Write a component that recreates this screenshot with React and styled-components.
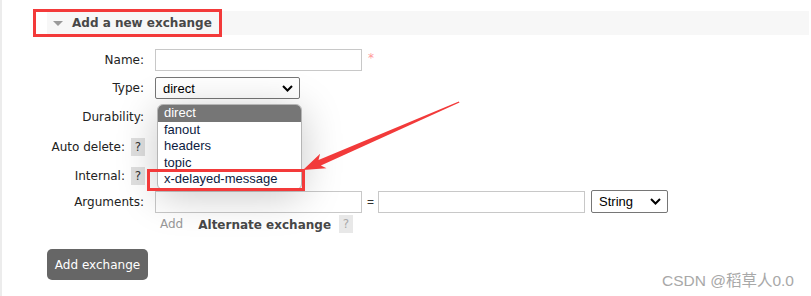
import React from 'react'
import styled, { createGlobalStyle } from 'styled-components'

const GlobalStyle = createGlobalStyle`
  body {
    margin: 0;
    background: #fff;
    font-family: "DejaVu Sans", Verdana, sans-serif;
  }
`

const Page = styled.div`
  position: relative;
  width: 809px;
  height: 296px;
  border-left: 2px solid #ececec;
  padding-top: 11px;
  box-sizing: border-box;
  overflow: hidden;
`

const SectionHeader = styled.div`
  display: flex;
  align-items: center;
  margin-left: 45px;
  height: 24px;
  background: #f7f7f7;
  padding-left: 6px;
`

const Triangle = styled.span`
  width: 0;
  height: 0;
  border-left: 5px solid transparent;
  border-right: 5px solid transparent;
  border-top: 5px solid #9a9a9a;
`

const Title = styled.h2`
  margin: 0 0 0 9px;
  font-size: 12px;
  font-weight: bold;
  color: #484848;
`

const Form = styled.div`
  display: flex;
  flex-direction: column;
  margin-top: 11px;
`

const Row = styled.div`
  display: grid;
  grid-template-columns: 143px 1fr;
  column-gap: 10px;
  align-items: center;
  height: ${p => p.$h}px;
`

const Label = styled.div`
  display: flex;
  justify-content: flex-end;
  align-items: center;
  gap: 6px;
  font-size: 12px;
  color: #222;
  padding-right: ${p => (p.$help ? 0 : 1)}px;
`

const Help = styled.span`
  display: inline-flex;
  align-items: center;
  justify-content: center;
  width: 14px;
  height: 18px;
  background: ${p => (p.$light ? '#e8e8e8' : '#e0e0e0')};
  color: ${p => (p.$light ? '#aaa' : '#333')};
  font-size: 12px;
`

const Field = styled.div`
  display: flex;
  align-items: center;
`

const Input = styled.div`
  width: ${p => p.$w}px;
  height: 22px;
  box-sizing: border-box;
  border: 1px solid #c8c8c8;
  background: #fff;
`

const Required = styled.span`
  margin-left: 6px;
  color: #f99;
  font-size: 12px;
  margin-top: -4px;
`

const Select = styled.div`
  display: flex;
  align-items: center;
  justify-content: space-between;
  width: ${p => p.$w}px;
  height: ${p => p.$h || 22}px;
  box-sizing: border-box;
  border: 1px solid #767676;
  border-radius: 2px;
  padding: 0 6px 0 7px;
  margin-left: ${p => p.$ml || 0}px;
  background: #fff;
  font-family: "Liberation Sans", Arial, sans-serif;
  font-size: 13px;
  color: #000;
`

const Equals = styled.span`
  margin: 0 4px 0 5px;
  font-family: "Liberation Sans", Arial, sans-serif;
  font-size: 12px;
  color: #333;
`

const AddLink = styled.span`
  margin-left: 5px;
  font-size: 12px;
  color: #999;
`

const SubTitle = styled.span`
  margin: 2px 8px 0 15px;
  font-size: 12px;
  font-weight: bold;
  color: #484848;
`

const Button = styled.button`
  margin: 14px 0 0 45px;
  width: 101px;
  height: 31px;
  border: none;
  border-radius: 5px;
  background: #666;
  color: #fff;
  font-family: "DejaVu Sans", Verdana, sans-serif;
  font-size: 12px;
  padding: 0;
`

const Dropdown = styled.ul`
  position: absolute;
  left: 155px;
  top: 104px;
  width: 145px;
  height: 86px;
  margin: 0;
  padding: 0;
  list-style: none;
  box-sizing: border-box;
  border: 1px solid #b5b5b5;
  border-radius: 6px;
  background: #fff;
  box-shadow: 0 6px 40px rgba(0, 0, 0, 0.22);
  overflow: hidden;
`

const Option = styled.li`
  height: 16.6px;
  line-height: 16.6px;
  padding-left: 6px;
  font-family: "Liberation Sans", Arial, sans-serif;
  font-size: 13px;
  color: ${p => (p.$active ? '#fff' : '#0c1b3f')};
  background: ${p => (p.$active ? '#767676' : 'transparent')};
`

const Mark = styled.div`
  position: absolute;
  left: ${p => p.$x}px;
  top: ${p => p.$y}px;
  width: ${p => p.$w}px;
  height: ${p => p.$h}px;
  box-sizing: border-box;
  border: 3px solid #f33a3a;
`

const Arrow = styled.svg`
  position: absolute;
  left: 0;
  top: 0;
`

const Watermark = styled.div`
  position: absolute;
  right: 15px;
  top: 268px;
  font-family: "Liberation Sans", "Noto Sans CJK SC", sans-serif;
  font-size: 15.5px;
  color: #a8a8a8;
`

function Chevron() {
  return (
    <svg width="11" height="7" viewBox="0 0 11 7">
      <polyline points="1,1 5.5,5.5 10,1" fill="none" stroke="#000" strokeWidth="2" />
    </svg>
  )
}

const options = ['direct', 'fanout', 'headers', 'topic', 'x-delayed-message']

export default function App() {
  return (
    <Page>
      <GlobalStyle />
      <SectionHeader>
        <Triangle />
        <Title>Add a new exchange</Title>
      </SectionHeader>
      <Form>
        <Row $h={28}>
          <Label>Name:</Label>
          <Field>
            <Input $w={207} />
            <Required>*</Required>
          </Field>
        </Row>
        <Row $h={28}>
          <Label>Type:</Label>
          <Field>
            <Select $w={145}>direct<Chevron /></Select>
          </Field>
        </Row>
        {/* the selects of these three rows lie under the open list */}
        <Row $h={30}>
          <Label>Durability:</Label>
          <Field />
        </Row>
        <Row $h={30}>
          <Label $help>Auto delete: <Help>?</Help></Label>
          <Field />
        </Row>
        <Row $h={28}>
          <Label $help>Internal: <Help>?</Help></Label>
          <Field />
        </Row>
        <Row $h={23}>
          <Label>Arguments:</Label>
          <Field>
            <Input $w={207} />
            <Equals>=</Equals>
            <Input $w={207} />
            <Select $w={77} $h={23} $ml={6}>String<Chevron /></Select>
          </Field>
        </Row>
        <Row $h={22}>
          <span />
          <Field>
            <AddLink>Add</AddLink>
            <SubTitle>Alternate exchange</SubTitle>
            <Help $light>?</Help>
          </Field>
        </Row>
      </Form>
      <Button>Add exchange</Button>

      <Dropdown>
        {options.map((o, i) => (
          <Option key={o} $active={i === 0}>{o}</Option>
        ))}
      </Dropdown>
      <Mark $x={31} $y={9} $w={189} $h={28} />
      <Mark $x={145} $y={169} $w={158} $h={22} />
      <Arrow width="811" height="296">
        <polygon
          points="301,170 324.5,168.3 318.9,165.4 457.5,102.6 456.8,101.6 316.5,159.9 318.1,153.7"
          fill="#f23a3a"
        />
      </Arrow>
      <Watermark>CSDN @稻草人0.0</Watermark>
    </Page>
  )
}
